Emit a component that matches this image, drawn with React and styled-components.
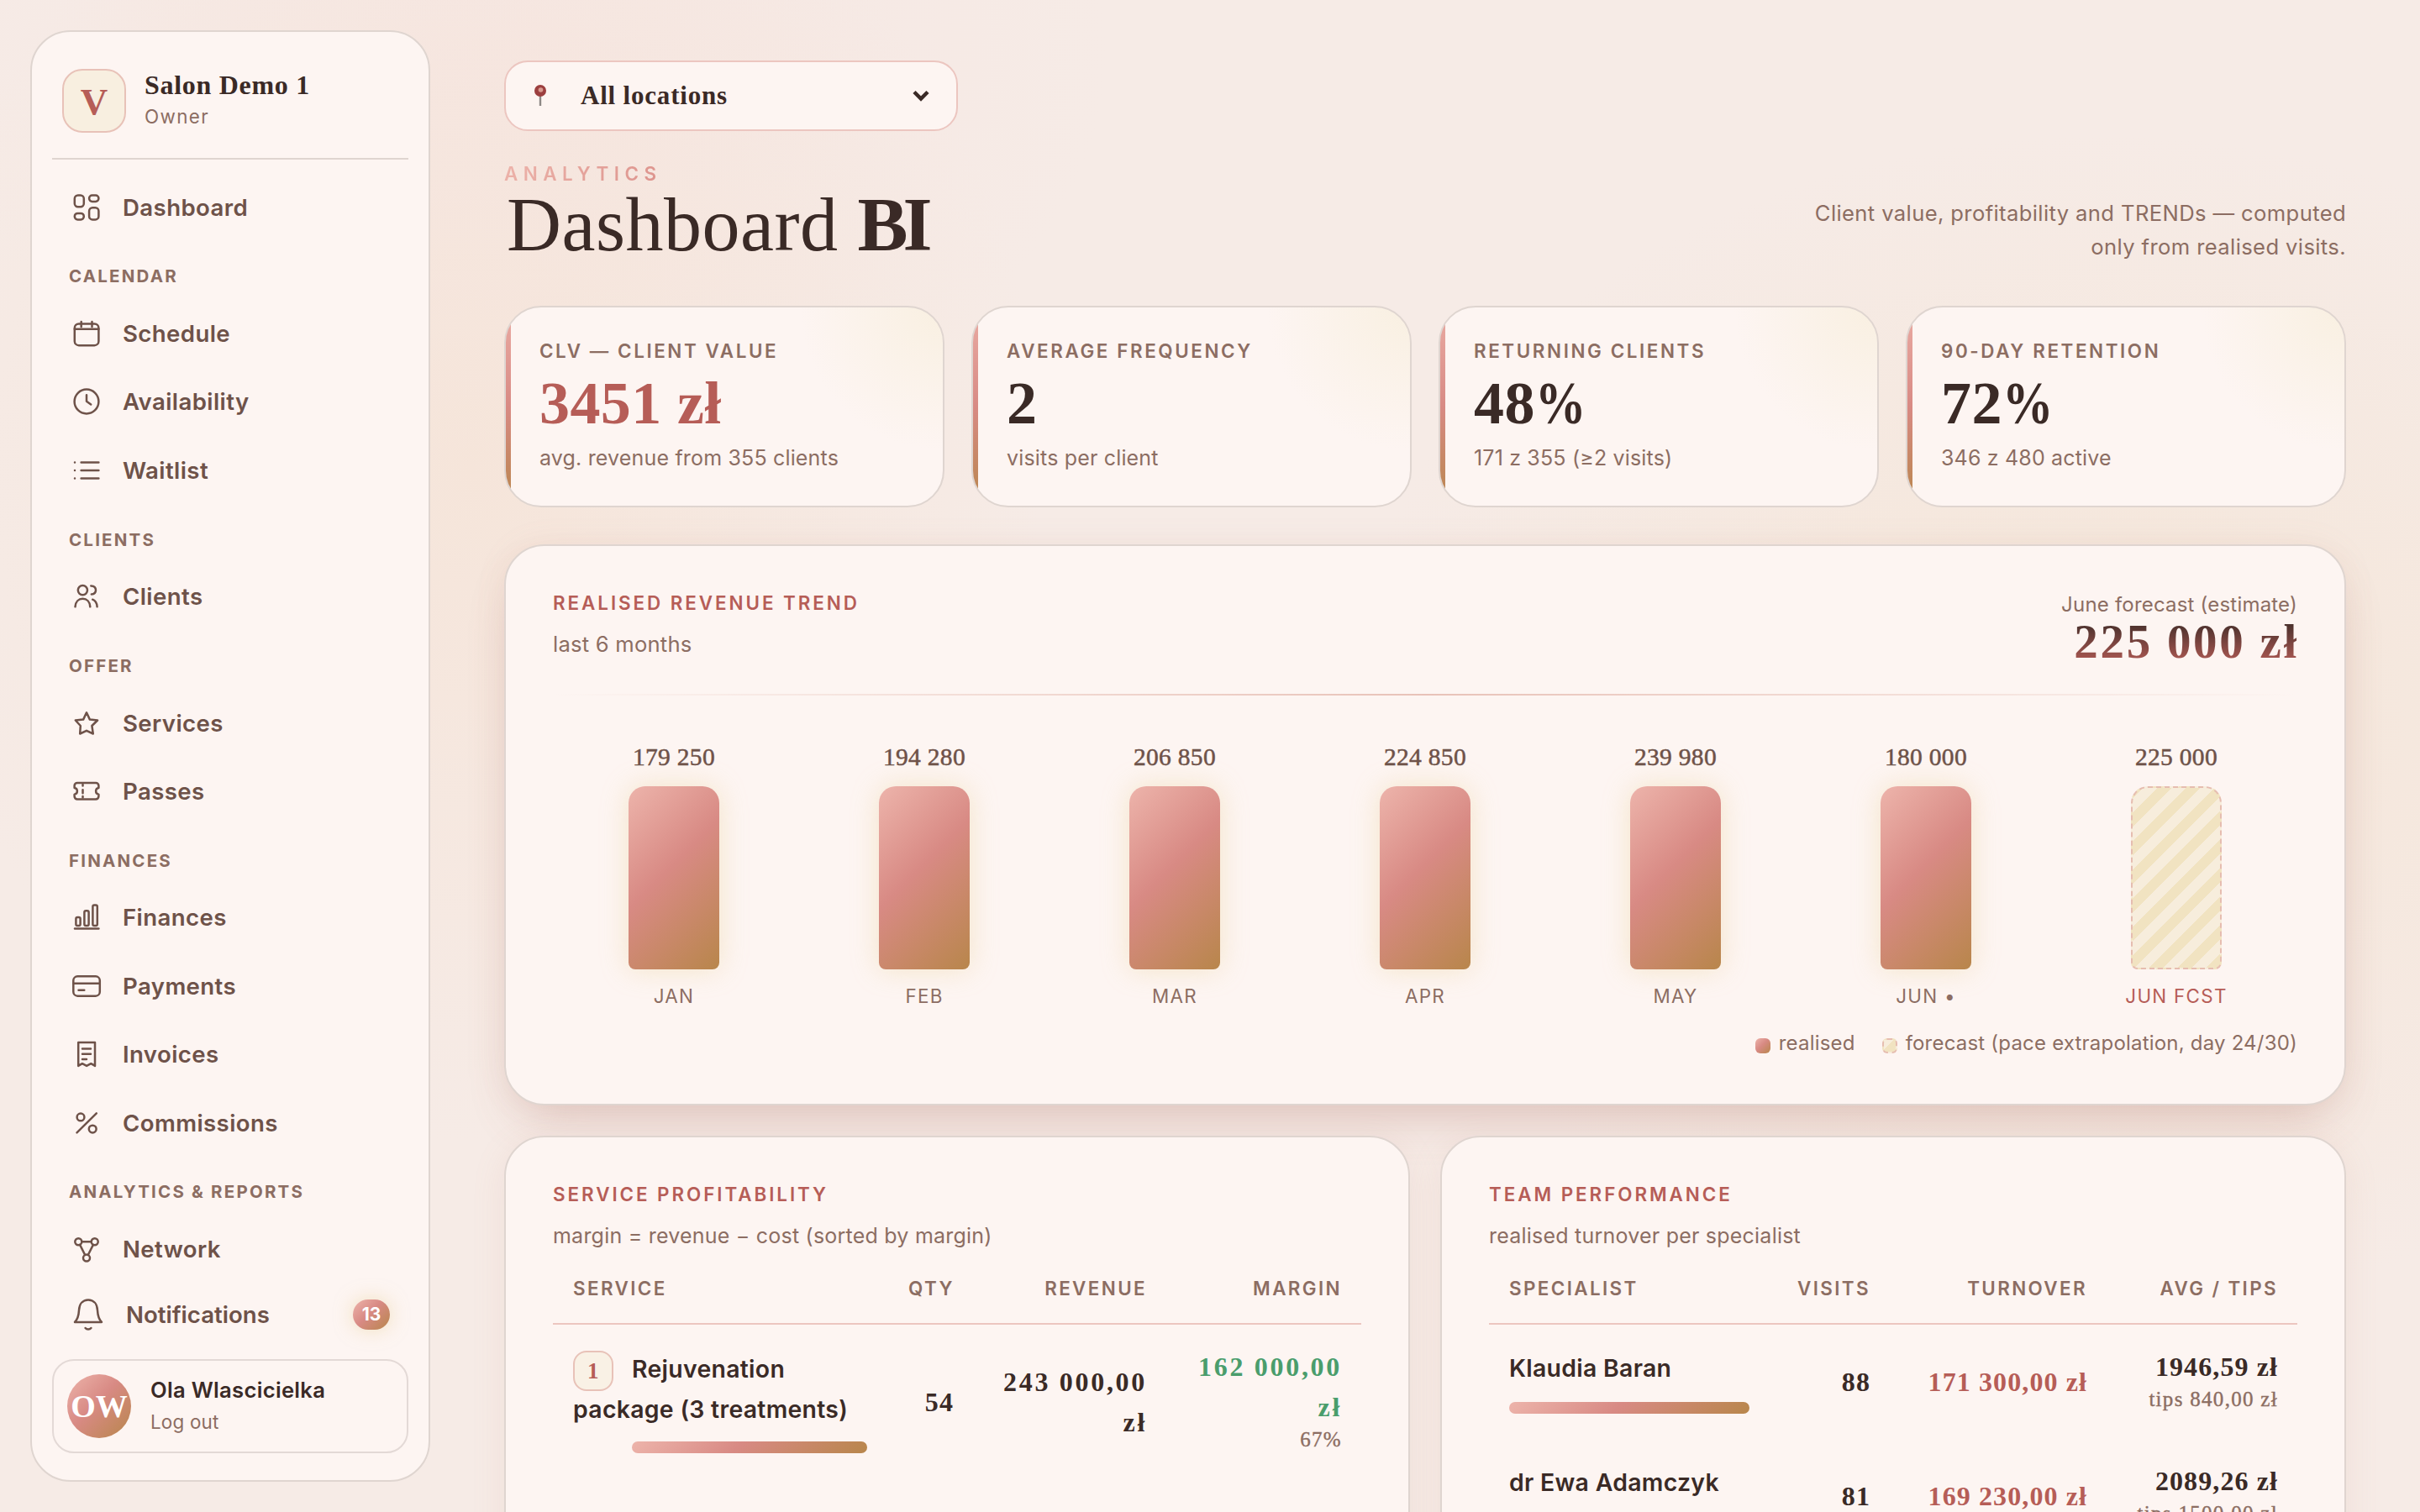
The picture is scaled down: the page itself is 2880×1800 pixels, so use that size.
import styled, { createGlobalStyle, css } from "styled-components";

const serif = `"Liberation Serif", "Times New Roman", serif`;
const sans = `Inter, "Liberation Sans", sans-serif`;
const rose = "#edb4ab 0%, #d88a84 45%, #b8864b 100%";
const stripes = css`
  background: repeating-linear-gradient(
    -45deg,
    #f1e3c1 0 12px,
    #f7eddc 12px 24px
  );
  border: 2px dashed #e6bdb0;
`;

const GlobalStyle = createGlobalStyle`
  * {
    box-sizing: border-box;
  }
  body {
    margin: 0;
    height: 1800px;
    overflow: hidden;
    color: #3a2a26;
    font-family: ${sans};
    background:
      radial-gradient(ellipse 680px 800px at 560px 560px, rgba(245, 224, 208, 0.55), transparent),
      radial-gradient(ellipse 700px 500px at 620px 60px, rgba(246, 222, 220, 0.3), transparent),
      radial-gradient(ellipse 900px 700px at 2500px 860px, rgba(244, 228, 212, 0.75), transparent),
      #f6ebe6;
  }
`;

const Shell = styled.div`
  display: flex;
  height: 1800px;
  padding: 36px 88px 0 36px;
  gap: 88px;
  overflow: hidden;
`;

/* sidebar */

const SideBar = styled.aside`
  display: flex;
  flex-direction: column;
  flex: none;
  width: 476px;
  height: 1728px;
  padding: 44px 24px 32px;
  border: 2px solid #dfd5d0;
  border-radius: 48px;
  background: #fdf5f2;
`;

const Brand = styled.div`
  display: flex;
  align-items: center;
  gap: 22px;
  padding: 0 12px 30px;
  border-bottom: 2px solid #dfd5d0;
  margin-bottom: 16px;
`;

const BrandMark = styled.div`
  width: 76px;
  height: 76px;
  border: 2px solid #e8c2b8;
  border-radius: 24px;
  background: #f8efe0;
  color: #b65d57;
  font: bold 45px/74px ${serif};
  text-align: center;
`;

const BrandName = styled.div`
  font: bold 32px/38px ${serif};
  letter-spacing: 0.7px;
`;

const Small = styled.div`
  font-size: 22.4px;
  line-height: 38px;
  letter-spacing: ${(p) => p.$tracking};
  color: #8c6d62;
`;

const NavLabel = styled.div`
  height: 69px;
  padding: 26px 20px 0;
  font-size: 20.5px;
  font-weight: 700;
  line-height: 32px;
  letter-spacing: 2.2px;
  color: #8c6d62;
`;

const NavItem = styled.a`
  display: flex;
  align-items: center;
  height: ${(p) => (p.$tight ? "74px" : "81.4px")};
  padding: 0 22px 0 23px;
  gap: 25px;
  font-size: 27.6px;
  font-weight: 600;
  letter-spacing: ${(p) => (p.$tight ? "0" : "0.4px")};
  color: #6e5249;
  svg {
    flex: none;
    fill: none;
    stroke: currentColor;
    stroke-width: 2.5;
    stroke-linecap: round;
    stroke-linejoin: round;
  }
`;

const Count = styled.span`
  margin-left: auto;
  width: 44px;
  height: 36px;
  border-radius: 18px;
  background: linear-gradient(135deg, ${rose});
  box-shadow: 0 0 22px rgba(232, 205, 140, 0.5);
  color: #fff;
  font-size: 21px;
  font-weight: 700;
  line-height: 36px;
  text-align: center;
`;

const UserCard = styled.div`
  display: flex;
  align-items: center;
  gap: 23px;
  height: 112px;
  margin-top: auto;
  padding: 0 16px;
  border: 2px solid #e3d9d6;
  border-radius: 26px;
`;

const Avatar = styled.div`
  width: 76px;
  height: 76px;
  border-radius: 50%;
  background: linear-gradient(135deg, ${rose});
  color: #fff;
  font: bold 38px/76px ${serif};
  text-align: center;
`;

const UserName = styled.div`
  font-size: 25.6px;
  font-weight: 600;
  line-height: 38px;
  letter-spacing: 0.3px;
`;

/* main column */

const Main = styled.main`
  flex: 1;
  min-width: 0;
  padding-top: 36px;
`;

const LocationSelect = styled.div`
  display: flex;
  align-items: center;
  width: 540px;
  height: 84px;
  padding: 0 32px 0 33px;
  border: 2px solid #ecc6c0;
  border-radius: 28px;
  background: #fdf5f2;
  font: bold 31px/40px ${serif};
  letter-spacing: 0.8px;
  span {
    flex: 1;
    margin-left: 40px;
  }
`;

const PageHead = styled.header`
  display: flex;
  justify-content: space-between;
  align-items: flex-end;
  margin: 36px 0 50px;
`;

const Eyebrow = styled.div`
  font-size: 22.4px;
  font-weight: 600;
  line-height: 30px;
  letter-spacing: 6.5px;
  color: transparent;
  background: linear-gradient(135deg, #edb4ab, #d88a84 50%, #b8864b);
  background-clip: text;
`;

const Title = styled.h1`
  margin: 0;
  padding-left: 3px;
  font: 400 90px/92px ${serif};
  letter-spacing: 0.5px;
  strong {
    letter-spacing: -6px;
  }
`;

const Note = styled.p`
  width: 700px;
  margin: 0;
  font-size: 25.6px;
  line-height: 40px;
  letter-spacing: 0.38px;
  text-align: right;
  color: #8c6d62;
`;

const KpiRow = styled.section`
  display: grid;
  grid-template-columns: repeat(4, 1fr);
  gap: 32px;
`;

const Kpi = styled.div`
  height: 240px;
  padding: 38px 40px;
  border: 2px solid #dfd5d0;
  border-radius: 44px;
  background:
    linear-gradient(#eaaca4, #d88a84 50%, #b8864b) left / 6px 100% no-repeat,
    radial-gradient(circle 170px at 100% 0, #f9f0e2 5%, rgba(249, 240, 226, 0)),
    #fdf5f2;
`;

const KpiLabel = styled.div`
  font-size: 22.4px;
  font-weight: 600;
  line-height: 28px;
  letter-spacing: 2.6px;
  color: #8c6d62;
`;

const KpiValue = styled.div`
  margin: 12px 0 11px;
  font: bold 72px/72px ${serif};
  letter-spacing: 0.4px;
  color: ${(p) => (p.$accent ? "#b65d57" : "#3a2a26")};
`;

const Percent = styled.span`
  display: inline-block;
  transform: scaleX(0.84);
  transform-origin: left;
`;

const KpiSub = styled.div`
  font-size: 25px;
  line-height: 36px;
  letter-spacing: 0.17px;
  color: #8c6d62;
`;

const Card = styled.section`
  padding: 53px 56px 0;
  border: 2px solid #dfd5d0;
  border-radius: 48px;
  background: #fdf5f2;
  box-shadow: ${(p) =>
    p.$raised
      ? "0 28px 60px -20px rgba(160, 90, 80, 0.3), 0 0 40px rgba(200, 140, 125, 0.07)"
      : "0 8px 40px rgba(200, 140, 125, 0.12)"};
`;

const TrendCard = styled(Card)`
  height: 668px;
  margin: 44px 0 36px;
`;

const CardTitle = styled.h2`
  margin: 0 0 14px;
  font-size: 22.4px;
  font-weight: 600;
  line-height: 30px;
  letter-spacing: 2.95px;
  color: #b65d57;
`;

const CardSub = styled.div`
  font-size: ${(p) => p.$size || "25px"};
  line-height: 40px;
  letter-spacing: 0.22px;
  color: #8c6d62;
`;

const TrendHead = styled.div`
  display: flex;
  justify-content: space-between;
  height: 123px;
`;

const Forecast = styled.div`
  text-align: right;
  font-size: 24px;
  line-height: 34px;
  letter-spacing: 0.2px;
  color: #8c6d62;
`;

const ForecastValue = styled.div`
  margin-top: -2px;
  margin-right: -2px;
  font: bold 57px/58px ${serif};
  letter-spacing: 2.7px;
  color: transparent;
  background: linear-gradient(#3a2a26, #b65d57);
  background-clip: text;
`;

const Divider = styled.hr`
  height: 2px;
  margin: 0;
  border: 0;
  background: linear-gradient(90deg, transparent, #e8c2b8, transparent);
`;

const Chart = styled.div`
  display: grid;
  grid-template-columns: repeat(7, 1fr);
  gap: 10px;
  padding-top: 55px;
`;

const Month = styled.div`
  display: flex;
  flex-direction: column;
  align-items: center;
`;

const MonthValue = styled.div`
  font: 400 29.5px/36px ${serif};
  letter-spacing: 0.3px;
  color: #6e5249;
  -webkit-text-stroke: 0.5px #6e5249;
`;

const Bar = styled.div`
  width: 108px;
  height: 218px;
  margin: 17px 0 16px;
  border-radius: 20px 20px 8px 8px;
  background: linear-gradient(135deg, ${rose});
  box-shadow: 0 0 32px rgba(232, 205, 140, 0.4);
  ${(p) =>
    p.$forecast &&
    css`
      ${stripes}
      box-shadow: none;
    `}
`;

const MonthName = styled.div`
  font-size: 22.4px;
  line-height: 32px;
  letter-spacing: 1.3px;
  color: ${(p) => (p.$forecast ? "#b65d57" : "#8c6d62")};
`;

const Legend = styled.div`
  display: flex;
  justify-content: flex-end;
  gap: 32px;
  margin-top: 22px;
  font-size: 24px;
  line-height: 36px;
  letter-spacing: 0.2px;
  color: #8c6d62;
  span {
    display: flex;
    gap: 10px;
  }
`;

const Swatch = styled.i`
  width: 18px;
  height: 18px;
  margin-top: 12px;
  border-radius: 6px;
  background: linear-gradient(135deg, ${rose});
  ${(p) =>
    p.$forecast &&
    css`
      ${stripes}
    `}
`;

const Columns = styled.div`
  display: grid;
  grid-template-columns: 1fr 1fr;
  gap: 36px;
  ${Card} {
    height: 560px;
  }
`;

const HeadRow = styled.div`
  display: grid;
  grid-template-columns: ${(p) => p.$cols};
  height: 86px;
  padding-top: 27px;
  border-bottom: 2px solid #ecc6c0;
  font-size: 22.4px;
  font-weight: 600;
  line-height: 32px;
  letter-spacing: 2.4px;
  color: #8c6d62;
  div {
    padding: 0 23px 0 24px;
    text-align: right;
  }
  div:first-child {
    text-align: left;
  }
`;

const Row = styled.div`
  display: grid;
  grid-template-columns: ${(p) => p.$cols};
  align-items: center;
  height: ${(p) => p.$height};
`;

const NameCell = styled.div`
  padding: 0 16px 2px 24px;
  font-size: 28.4px;
  font-weight: 600;
  line-height: 48px;
  letter-spacing: 0.3px;
`;

const Rank = styled.span`
  display: inline-block;
  width: 48px;
  height: 48px;
  margin: -4px 22px -4px 0;
  border: 2px solid #e8c2b8;
  border-radius: 16px;
  background: #f9f1e5;
  color: #b65d57;
  font: bold 27px/44px ${serif};
  text-align: center;
  vertical-align: middle;
`;

const Meter = styled.div`
  height: 14px;
  margin-top: ${(p) => (p.$indent ? "14px" : "16px")};
  margin-left: ${(p) => p.$indent || 0};
  width: ${(p) => p.$width};
  border-radius: 7px;
  background: linear-gradient(135deg, ${rose});
`;

const NumCell = styled.div`
  padding: 0 23px 0 0;
  font: bold 32px/48px ${serif};
  letter-spacing: ${(p) => p.$tracking || "1.1px"};
  text-align: right;
  color: ${(p) => p.$color || "#3a2a26"};
  small {
    display: block;
    margin-bottom: 6px;
    font: 400 25px/30px ${serif};
    letter-spacing: 1.3px;
    color: #8c6d62;
    -webkit-text-stroke: 0.4px #8c6d62;
  }
`;

const icons = {
  dashboard: (
    <>
      <rect x="3.8" y="3.5" width="11" height="13.8" rx="4" />
      <rect x="21.1" y="3.5" width="11.3" height="7.4" rx="3.6" />
      <rect x="3.8" y="24.9" width="11" height="7.5" rx="3.6" />
      <rect x="21.1" y="18.2" width="11.3" height="14.2" rx="4" />
    </>
  ),
  schedule: (
    <>
      <rect x="3.8" y="6.4" width="28.6" height="25.8" rx="5" />
      <path d="M3.8 12.8h28.6M11.7 4v6M24.5 4v6" />
    </>
  ),
  clock: (
    <>
      <circle cx="18" cy="18" r="14.4" />
      <path d="M18 10.3v7.5l5.2 3.7" />
    </>
  ),
  list: <path d="M11.6 8.5h20.8M11.6 18h20.8M11.6 27.5h20.8M4 8.5h.02M4 18h.02M4 27.5h.02" />,
  clients: (
    <>
      <circle cx="13.4" cy="10.6" r="5.6" />
      <path d="M4.500 30.300c.4-6 4-9.500 8.900-9.500s8.500 3.500 8.900 9.500M23.300 5.400c3.800.2 5.700 2.300 5.700 5.100s-2 4.700-5.200 5M25.200 21.700c3.200 1.300 5.100 4.500 5.400 8.600" />
    </>
  ),
  star: <path d="M18 5.300l3.900 8.300 9.200.9-6.700 6.500 1.400 9.500-7.800-3.700-7.800 3.700.6-9.500-6-6.500 9.300-.9z" />,
  ticket: (
    <>
      <path d="M7 7.900h22a3.400 3.400 0 0 1 3.400 3.400v2.600c-2 .3-3.300 1.900-3.300 3.900s1.300 3.600 3.300 3.900v2.400a3.400 3.400 0 0 1-3.400 3.400H7a3.400 3.400 0 0 1-3.400-3.400v-2.400c2-.3 3.300-1.900 3.300-3.900S5.600 14.200 3.600 13.900v-2.600A3.400 3.400 0 0 1 7 7.900z" />
      <path d="M13.500 10v1.500M13.500 16.200v4M13.500 24v1.500" />
    </>
  ),
  bars: (
    <>
      <rect x="5.400" y="18" width="5.200" height="10" rx="1.800" />
      <rect x="15.400" y="10.200" width="5.200" height="17.800" rx="1.800" />
      <rect x="25.400" y="3.400" width="5.400" height="24.600" rx="1.800" />
      <path d="M4 31.500h28.400" />
    </>
  ),
  card: (
    <>
      <rect x="2.300" y="6.300" width="31.500" height="23.400" rx="5" />
      <path d="M2.300 14.700h31.500M8.500 22.700h6.800" />
    </>
  ),
  invoice: (
    <path d="M8.200 3.900h19.800v28l-4.700-2.700-5.200 2.700-5.200-2.700-4.700 2.700zM13 11.400h10M13 17.700h10M13 24h5" />
  ),
  percent: (
    <>
      <path d="M6.500 29.400l23.300-23" />
      <circle cx="11" cy="10.900" r="4.400" />
      <circle cx="25.200" cy="25.100" r="4.400" />
    </>
  ),
  network: (
    <>
      <circle cx="8.300" cy="9.300" r="4" />
      <circle cx="27.700" cy="9.300" r="4" />
      <circle cx="18" cy="28.600" r="4" />
      <path d="M12.300 9.300h11.400M10.100 12.900l6.100 12.100M25.900 12.900l-6.100 12.100" />
    </>
  ),
};

const nav = [
  { items: [["dashboard", "Dashboard"]] },
  {
    label: "CALENDAR",
    items: [
      ["schedule", "Schedule"],
      ["clock", "Availability"],
      ["list", "Waitlist"],
    ],
  },
  { label: "CLIENTS", items: [["clients", "Clients"]] },
  {
    label: "OFFER",
    items: [
      ["star", "Services"],
      ["ticket", "Passes"],
    ],
  },
  {
    label: "FINANCES",
    items: [
      ["bars", "Finances"],
      ["card", "Payments"],
      ["invoice", "Invoices"],
      ["percent", "Commissions"],
    ],
  },
  { label: "ANALYTICS & REPORTS", items: [["network", "Network"]] },
];

const kpis = [
  { label: "CLV — CLIENT VALUE", value: "3451 zł", sub: "avg. revenue from 355 clients", accent: true },
  { label: "AVERAGE FREQUENCY", value: "2", sub: "visits per client" },
  { label: "RETURNING CLIENTS", value: "48", percent: true, sub: "171 z 355 (≥2 visits)" },
  { label: "90-DAY RETENTION", value: "72", percent: true, sub: "346 z 480 active" },
];

const months = [
  ["JAN", "179 250"],
  ["FEB", "194 280"],
  ["MAR", "206 850"],
  ["APR", "224 850"],
  ["MAY", "239 980"],
  ["JUN •", "180 000"],
  ["JUN FCST", "225 000", true],
];

const team = [
  { name: "Klaudia Baran", visits: 88, turnover: "171 300,00 zł", avg: "1946,59 zł", tips: "tips 840,00 zł", bar: "286px" },
  { name: "dr Ewa Adamczyk", visits: 81, turnover: "169 230,00 zł", avg: "2089,26 zł", tips: "tips 1500,00 zł", bar: "282px" },
];

const serviceCols = "1fr 101px 230px 232px";
const teamCols = "1fr 140px 258px 227px";

const Navigation = () => (
  <SideBar>
    <Brand>
      <BrandMark>V</BrandMark>
      <div>
        <BrandName>Salon Demo 1</BrandName>
        <Small $tracking="1.4px">Owner</Small>
      </div>
    </Brand>
    {nav.map((group, i) => (
      <div key={i}>
        {group.label && <NavLabel>{group.label}</NavLabel>}
        {group.items.map(([icon, name]) => (
          <NavItem key={name}>
            <svg width="36" height="36" viewBox="0 0 36 36">
              {icons[icon]}
            </svg>
            {name}
          </NavItem>
        ))}
      </div>
    ))}
    <NavItem $tight>
      <svg width="40" height="40" viewBox="0 0 40 40">
        <path d="M4 28.900c3-2.900 4.600-6.500 5-14 .4-7.500 4.500-12.400 11-12.400s10.600 4.900 11 12.400c.4 7.500 2 11.100 5 14zM16.600 36c1.600 2 5.200 2 6.800 0" />
      </svg>
      Notifications
      <Count>13</Count>
    </NavItem>
    <UserCard>
      <Avatar>OW</Avatar>
      <div>
        <UserName>Ola Wlascicielka</UserName>
        <Small $tracking="0.2px">Log out</Small>
      </div>
    </UserCard>
  </SideBar>
);

const Trend = () => (
  <TrendCard $raised>
    <TrendHead>
      <div>
        <CardTitle>REALISED REVENUE TREND</CardTitle>
        <CardSub $size="25.6px">last 6 months</CardSub>
      </div>
      <Forecast>
        June forecast (estimate)
        <ForecastValue>225 000 zł</ForecastValue>
      </Forecast>
    </TrendHead>
    <Divider />
    <Chart>
      {months.map(([name, value, forecast]) => (
        <Month key={name}>
          <MonthValue>{value}</MonthValue>
          <Bar $forecast={forecast} />
          <MonthName $forecast={forecast}>{name}</MonthName>
        </Month>
      ))}
    </Chart>
    <Legend>
      <span>
        <Swatch />
        realised
      </span>
      <span>
        <Swatch $forecast />
        forecast (pace extrapolation, day 24/30)
      </span>
    </Legend>
  </TrendCard>
);

const App = () => (
  <>
    <GlobalStyle />
    <Shell>
      <Navigation />
      <Main>
        <LocationSelect>
          <svg width="16" height="28" viewBox="0 0 16 28">
            <path d="M8 12v14" stroke="#8d8886" strokeWidth="2.400" />
            <circle cx="8" cy="8" r="7" fill="#9c3f3f" />
            <circle cx="8.500" cy="7" r="2.800" fill="#d99a90" />
          </svg>
          <span>All locations</span>
          <svg width="20" height="14" viewBox="0 0 20 14" fill="none" stroke="#3a2a26" strokeWidth="4.500">
            <path d="M2 2.500l8 8 8-8" />
          </svg>
        </LocationSelect>
        <PageHead>
          <div>
            <Eyebrow>ANALYTICS</Eyebrow>
            <Title>
              Dashboard <strong>BI</strong>
            </Title>
          </div>
          <Note>
            Client value, profitability and TRENDs — computed
            <br />
            only from realised visits.
          </Note>
        </PageHead>
        <KpiRow>
          {kpis.map((k) => (
            <Kpi key={k.label}>
              <KpiLabel>{k.label}</KpiLabel>
              <KpiValue $accent={k.accent}>
                {k.value}
                {k.percent && <Percent>%</Percent>}
              </KpiValue>
              <KpiSub>{k.sub}</KpiSub>
            </Kpi>
          ))}
        </KpiRow>
        <Trend />
        <Columns>
          <Card>
            <CardTitle>SERVICE PROFITABILITY</CardTitle>
            <CardSub>margin = revenue − cost (sorted by margin)</CardSub>
            <HeadRow $cols={serviceCols}>
              <div>SERVICE</div>
              <div>QTY</div>
              <div>REVENUE</div>
              <div>MARGIN</div>
            </HeadRow>
            <Row $cols={serviceCols} $height="184px">
              <NameCell>
                <Rank>1</Rank>Rejuvenation package (3 treatments)
                <Meter $indent="70px" $width="280px" />
              </NameCell>
              <NumCell>54</NumCell>
              <NumCell $tracking="2.7px">
                243 000,00
                <br />
                zł
              </NumCell>
              <NumCell $tracking="2.7px" $color="#4a9d6c">
                162 000,00
                <br />
                zł
                <small>67%</small>
              </NumCell>
            </Row>
          </Card>
          <Card>
            <CardTitle>TEAM PERFORMANCE</CardTitle>
            <CardSub>realised turnover per specialist</CardSub>
            <HeadRow $cols={teamCols}>
              <div>SPECIALIST</div>
              <div>VISITS</div>
              <div>TURNOVER</div>
              <div>AVG / TIPS</div>
            </HeadRow>
            {team.map((t) => (
              <Row key={t.name} $cols={teamCols} $height="136px">
                <NameCell>
                  {t.name}
                  <Meter $width={t.bar} />
                </NameCell>
                <NumCell>{t.visits}</NumCell>
                <NumCell $color="#b65d57">{t.turnover}</NumCell>
                <NumCell>
                  {t.avg}
                  <small>{t.tips}</small>
                </NumCell>
              </Row>
            ))}
          </Card>
        </Columns>
      </Main>
    </Shell>
  </>
);

export default App;
